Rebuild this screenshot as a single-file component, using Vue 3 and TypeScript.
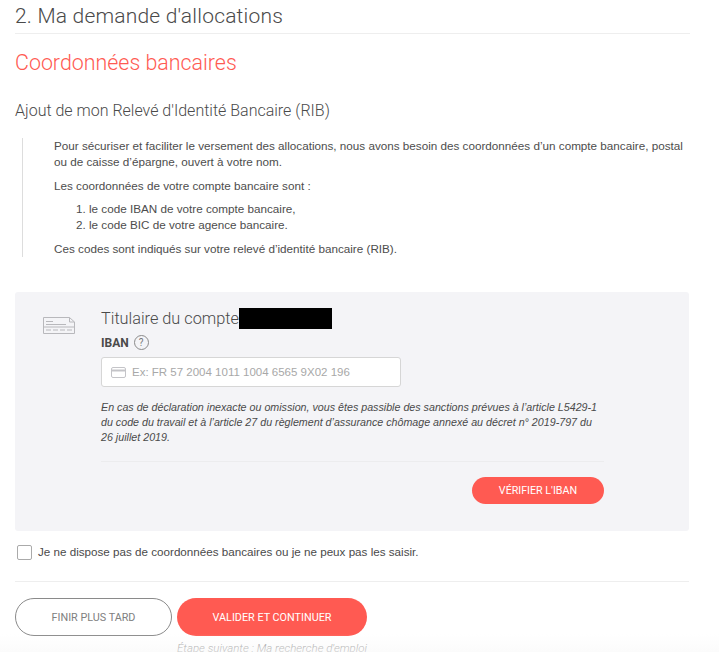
<script setup lang="ts">
const codes: string[] = [
  "le code IBAN de votre compte bancaire,",
  "le code BIC de votre agence bancaire.",
];
</script>

<template>
  <div class="page">
    <h1 class="step-title">2. Ma demande d'allocations</h1>
    <h2 class="section-title">Coordonnées bancaires</h2>
    <h3 class="sub-title">Ajout de mon Relevé d'Identité Bancaire (RIB)</h3>

    <div class="intro">
      <p>Pour sécuriser et faciliter le versement des allocations, nous avons besoin des coordonnées d’un compte bancaire, postal ou de caisse d’épargne, ouvert à votre nom.</p>
      <p>Les coordonnées de votre compte bancaire sont :</p>
      <ol>
        <li v-for="code in codes" :key="code">{{ code }}</li>
      </ol>
      <p>Ces codes sont indiqués sur votre relevé d’identité bancaire (RIB).</p>
    </div>

    <section class="panel">
      <div class="panel-icon">
        <svg width="32" height="17" viewBox="0 0 32 17" fill="none" stroke="#b8b8bc" stroke-width="1">
          <path d="M0.5 0.5h26l5 4.5v11.5H0.5z" />
          <path d="M26.5 0.5v4.5h5" />
          <path d="M3 4.5h7M3 7.5h20M0.5 10h31" />
          <path d="M3 13h26" stroke-dasharray="5 2" />
        </svg>
      </div>
      <div class="panel-body">
        <div class="holder">
          <span>Titulaire du compte</span><span class="redacted"></span>
        </div>
        <div class="iban-label">
          <span>IBAN</span>
          <span class="help">?</span>
        </div>
        <div class="iban-input">
          <svg width="15" height="11" viewBox="0 0 15 11" fill="none" stroke="#c4c4c8" stroke-width="1">
            <rect x="0.5" y="0.5" width="14" height="10" rx="1.5" />
            <path d="M0.5 3.5h14" stroke-width="2" />
          </svg>
          <span>Ex: FR 57 2004 1011 1004 6565 9X02 196</span>
        </div>
        <p class="legal">En cas de déclaration inexacte ou omission, vous êtes passible des sanctions prévues à l’article L5429-1 du code du travail et à l’article 27 du règlement d’assurance chômage annexé au décret n° 2019-797 du 26 juillet 2019.</p>
        <div class="verify-row">
          <button class="btn-verify" type="button">VÉRIFIER L'IBAN</button>
        </div>
      </div>
    </section>

    <label class="no-account">
      <span class="box"></span>
      <span>Je ne dispose pas de coordonnées bancaires ou je ne peux pas les saisir.</span>
    </label>

    <div class="actions">
      <button class="btn-later" type="button">FINIR PLUS TARD</button>
      <div class="next">
        <button class="btn-submit" type="button">VALIDER ET CONTINUER</button>
        <span class="next-hint">Étape suivante : Ma recherche d'emploi</span>
      </div>
    </div>

    <div class="fade"></div>
  </div>
</template>

<style>
html, body {
  margin: 0;
  background: #fff;
  overflow: hidden;
}
</style>

<style scoped>
.page {
  position: relative;
  width: 719px;
  height: 652px;
  overflow: hidden;
  box-sizing: border-box;
  padding-left: 15px;
  font-family: Roboto, "Liberation Sans", sans-serif;
  color: #4a4a4a;
}

.step-title {
  width: 675px;
  margin: 0;
  height: 34px;
  box-sizing: border-box;
  padding-top: 3px;
  border-bottom: 1px solid #eeeeee;
  font-size: 21px;
  line-height: 26px;
  font-weight: 300;
  letter-spacing: 0.2px;
}

.section-title {
  margin: 16px 0 0;
  font-size: 21.4px;
  line-height: 26px;
  font-weight: 300;
  color: #ff5a52;
}

.sub-title {
  margin: 24px 0 0;
  font-size: 16px;
  line-height: 22px;
  font-weight: 300;
}

.intro {
  margin: 16px 0 0 7px;
  padding-left: 31px;
  width: 635px;
  border-left: 1px solid #dddddd;
  font-family: "Liberation Sans", Arial, sans-serif;
  font-size: 11.7px;
  line-height: 16px;
  color: #4d4d4d;
}

.intro p {
  margin: 0 0 8px;
}

.intro ol {
  margin: -1px 0 8px;
  padding-left: 35px;
}

.panel {
  display: flex;
  width: 674px;
  height: 239px;
  margin-top: 35px;
  background: #f4f4f7;
  border-radius: 3px;
}

.panel-icon {
  width: 86px;
  padding: 25px 0 0 28px;
  box-sizing: border-box;
}

.panel-body {
  width: 503px;
  padding-top: 15px;
}

.holder {
  display: flex;
  align-items: center;
  height: 22px;
  font-size: 16.3px;
  font-weight: 300;
}

.redacted {
  width: 93px;
  height: 21px;
  background: #000;
}

.iban-label {
  display: flex;
  align-items: center;
  gap: 5px;
  margin-top: 6px;
  font-size: 12px;
  font-weight: 700;
}

.help {
  width: 13px;
  height: 13px;
  border: 1px solid #8a8a8a;
  border-radius: 50%;
  display: flex;
  align-items: center;
  justify-content: center;
  font-size: 10px;
  font-weight: 400;
  color: #777;
}

.iban-input {
  display: flex;
  align-items: center;
  gap: 6px;
  width: 300px;
  height: 30px;
  margin-top: 7px;
  padding-left: 9px;
  box-sizing: border-box;
  background: #fff;
  border: 1px solid #d6d6d6;
  border-radius: 3px;
  font-family: "Liberation Sans", Arial, sans-serif;
  font-size: 11.5px;
  color: #a8a8a8;
}

.legal {
  margin: 13px 0 0;
  padding-bottom: 16px;
  border-bottom: 1px solid #ececee;
  font-family: "Liberation Sans", Arial, sans-serif;
  font-size: 10.7px;
  line-height: 15px;
  font-style: italic;
}

.verify-row {
  display: flex;
  justify-content: flex-end;
  margin-top: 15px;
}

button {
  font-family: inherit;
  cursor: pointer;
}

.btn-verify {
  width: 132px;
  height: 27px;
  border: 0;
  border-radius: 14px;
  background: #ff5a52;
  color: #fff;
  font-size: 10.7px;
}

.no-account {
  display: flex;
  align-items: center;
  gap: 6px;
  margin: 12px 0 0 2px;
  font-family: "Liberation Sans", Arial, sans-serif;
  font-size: 11.65px;
  line-height: 18px;
}

.box {
  width: 13px;
  height: 13px;
  background: #fff;
  border: 1px solid #aaaaaa;
  border-radius: 2px;
}

.actions {
  display: flex;
  gap: 5px;
  width: 674px;
  margin-top: 20px;
  padding-top: 16px;
  border-top: 1px solid #eeeeee;
}

.btn-later {
  width: 157px;
  height: 38px;
  background: #fff;
  border: 1px solid #8a8a8a;
  border-radius: 19px;
  color: #808080;
  font-size: 10.8px;
}

.next {
  display: flex;
  flex-direction: column;
  align-items: center;
}

.btn-submit {
  width: 190px;
  height: 38px;
  border: 0;
  border-radius: 19px;
  background: #ff5a52;
  color: #fff;
  font-size: 10.8px;
}

.next-hint {
  margin-top: 5px;
  font-size: 11.5px;
  font-style: italic;
  font-weight: 300;
  color: #8a8a8a;
}

.fade {
  position: absolute;
  left: 0;
  right: 0;
  bottom: 0;
  height: 18px;
  background: linear-gradient(rgba(248, 248, 248, 0), rgba(248, 248, 248, 0.6));
}
</style>
